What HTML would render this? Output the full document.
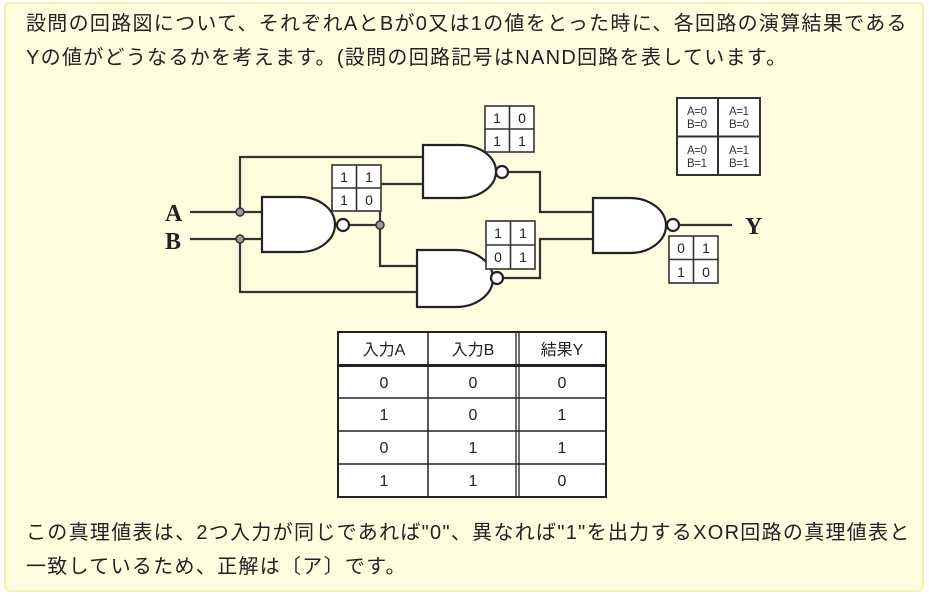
<!DOCTYPE html>
<html><head><meta charset="utf-8">
<style>
html,body{margin:0;padding:0;background:#fff;}
body{width:929px;height:596px;position:relative;overflow:hidden;font-family:"Liberation Sans","Noto Sans CJK JP",sans-serif;}
.box{position:absolute;left:4px;top:2px;width:916px;height:586px;background:#fffde0;border:2px solid #f6efb2;border-radius:6px;}
.t{position:absolute;left:26px;font-size:20px;letter-spacing:1.3px;color:#222;white-space:nowrap;line-height:24px;}
svg{position:absolute;left:0;top:0;}
</style></head><body>
<div class="box"></div>
<div class="t" style="top:12px">設問の回路図について、それぞれAとBが0又は1の値をとった時に、各回路の演算結果である</div>
<div class="t" style="top:46px">Yの値がどうなるかを考えます。(設問の回路記号はNAND回路を表しています。</div>
<div class="t" style="top:521px">この真理値表は、2つ入力が同じであれば"0"、異なれば"1"を出力するXOR回路の真理値表と</div>
<div class="t" style="top:555px">一致しているため、正解は〔ア〕です。</div>
<svg width="929" height="596" viewBox="0 0 929 596">
<g fill="none" stroke="#333" stroke-width="2.2">
<path d="M190 212H262M190 239H262"/>
<path d="M240 212V157H423"/>
<path d="M240 239V292H417"/>
<path d="M349 225H380M380 184H423M380 184V266H417"/>
<path d="M508 172H540V212H593M503 278H540V239H593"/>
<path d="M679 225H732"/>
</g>
<g fill="#fff" stroke="#222" stroke-width="2.2">
<path d="M262 197H300A35 27.5 0 0 1 300 252H262Z"/>
<circle cx="343" cy="225" r="6"/>
<path d="M423 145H460A36 26.5 0 0 1 460 198H423Z"/>
<circle cx="502" cy="172" r="6"/>
<path d="M417 250H456A37 28.5 0 0 1 456 307H417Z"/>
<circle cx="497" cy="278" r="6"/>
<path d="M593 198H630A36 27.5 0 0 1 630 253H593Z"/>
<circle cx="673" cy="225" r="6"/>
</g>
<g fill="#999" stroke="#333" stroke-width="1.5">
<circle cx="240" cy="212" r="4"/><circle cx="240" cy="239" r="4"/><circle cx="380" cy="225" r="4"/>
</g>
<g font-family="Liberation Serif,serif" font-weight="bold" font-size="24" fill="#222">
<text x="165" y="221">A</text><text x="165" y="249">B</text><text x="745" y="234">Y</text>
</g>
<g stroke="#333" stroke-width="1.6" fill="#fff">
<rect x="332" y="165" width="49" height="46"/><path d="M356.5 165V211M332 188H381"/>
<rect x="485" y="106" width="49" height="46"/><path d="M509.5 106V152M485 129H534"/>
<rect x="486" y="221" width="49" height="48"/><path d="M510.5 221V269M486 245H535"/>
<rect x="669" y="236" width="49" height="47"/><path d="M693.5 236V283M669 259.5H718"/>
<rect x="677" y="98" width="83" height="77" stroke-width="2"/><path d="M718 98V175M677 136.5H760" stroke-width="2"/>
</g>
<g font-family="Liberation Sans,sans-serif" font-size="14" fill="#222" text-anchor="middle">
<text x="344" y="182">1</text><text x="369" y="182">1</text><text x="344" y="205">1</text><text x="369" y="205">0</text>
<text x="497" y="123">1</text><text x="522" y="123">0</text><text x="497" y="146">1</text><text x="522" y="146">1</text>
<text x="498" y="238">1</text><text x="523" y="238">1</text><text x="498" y="262">0</text><text x="523" y="262">1</text>
<text x="681" y="253">0</text><text x="706" y="253">1</text><text x="681" y="277">1</text><text x="706" y="277">0</text>
</g>
<g font-family="Liberation Sans,sans-serif" font-size="11.5" fill="#333" text-anchor="middle" transform="translate(0,0)">
<text x="697" y="115" textLength="20">A=0</text><text x="697" y="128" textLength="20">B=0</text>
<text x="739" y="115" textLength="20">A=1</text><text x="739" y="128" textLength="20">B=0</text>
<text x="697" y="154" textLength="20">A=0</text><text x="697" y="167" textLength="20">B=1</text>
<text x="739" y="154" textLength="20">A=1</text><text x="739" y="167" textLength="20">B=1</text>
</g>
<g stroke="#222" fill="none">
<rect x="338" y="332" width="268" height="165" fill="#fff" stroke-width="2"/>
<path d="M338 365.5H606" stroke-width="3"/>
<path d="M338 398H606M338 431H606M338 464H606" stroke-width="1.5"/>
<path d="M428 332V497" stroke-width="1.5"/>
<path d="M516 332V497M519 332V497" stroke-width="1.3"/>
</g>
<g font-family="Liberation Sans,'Noto Sans CJK JP',sans-serif" font-size="16" fill="#222" text-anchor="middle">
<text x="384" y="355">入力A</text><text x="473" y="355">入力B</text><text x="562" y="355">結果Y</text>
<text x="384" y="388">0</text><text x="473" y="388">0</text><text x="562" y="388">0</text>
<text x="384" y="420">1</text><text x="473" y="420">0</text><text x="562" y="420">1</text>
<text x="384" y="453">0</text><text x="473" y="453">1</text><text x="562" y="453">1</text>
<text x="384" y="486">1</text><text x="473" y="486">1</text><text x="562" y="486">0</text>
</g>
</svg>
</body></html>
